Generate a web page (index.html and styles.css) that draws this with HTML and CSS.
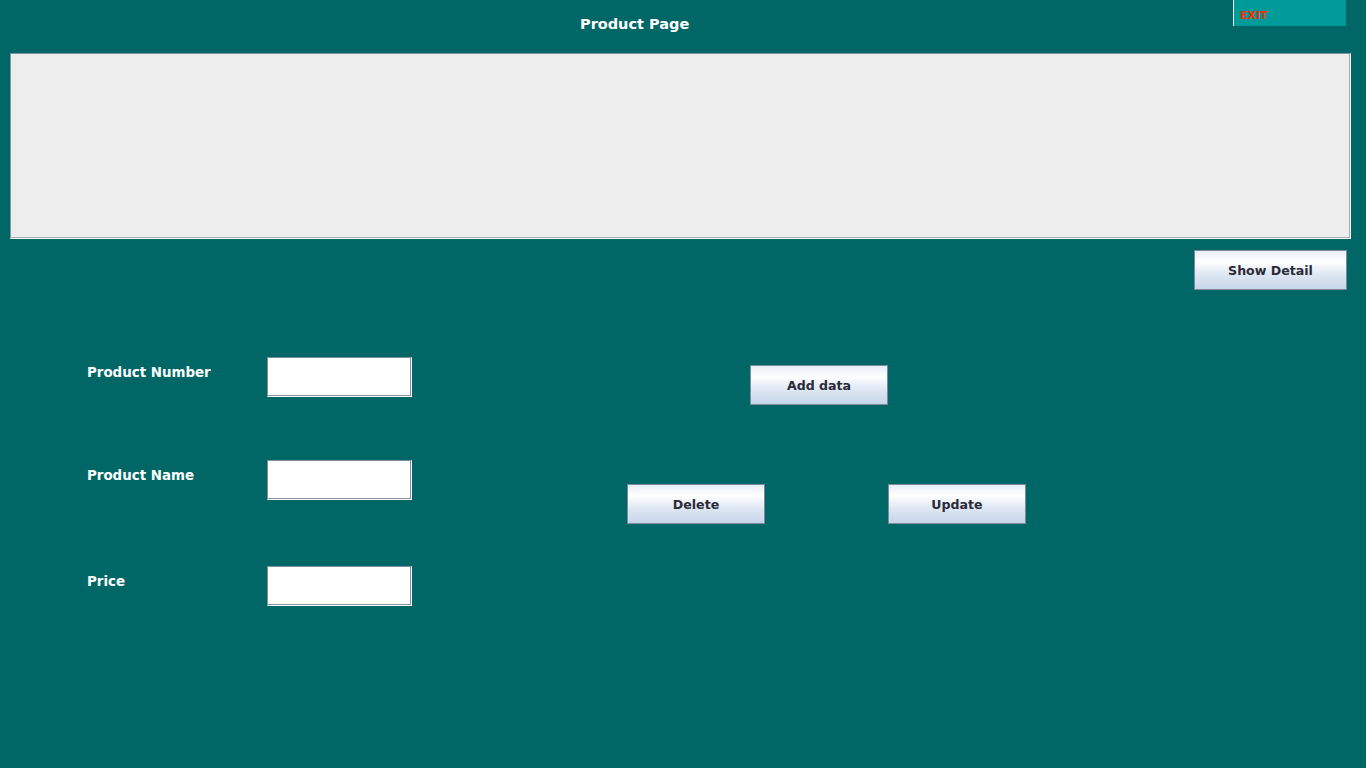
FILE: index.html
```html
<!DOCTYPE html>
<html>
<head>
<meta charset="utf-8">
<title>Product Page</title>
<link rel="stylesheet" href="styles.css">
</head>
<body>
<header class="header">
  <h1 class="title">Product Page</h1>
  <button class="exit">EXIT</button>
</header>
<div class="panel"></div>
<div class="detail-row">
  <button class="btn btn-detail">Show Detail</button>
</div>
<main class="workspace">
  <div class="form">
    <label class="label">Product Number</label>
    <input class="field" type="text">
    <label class="label">Product Name</label>
    <input class="field" type="text">
    <label class="label">Price</label>
    <input class="field" type="text">
  </div>
  <div class="actions">
    <div class="action-top">
      <button class="btn">Add data</button>
    </div>
    <div class="action-bottom">
      <button class="btn">Delete</button>
      <button class="btn">Update</button>
    </div>
  </div>
</main>
</body>
</html>
```

FILE: styles.css
```css
* { box-sizing: border-box; }
html, body {
  margin: 0;
  padding: 0;
  height: 100%;
}
body {
  background: #006766;
  font-family: "DejaVu Sans", Verdana, sans-serif;
  font-weight: bold;
  font-size: 13px;
  overflow: hidden;
}
.header {
  display: flex;
  align-items: flex-start;
  height: 53px;
}
.title {
  margin: 15px 0 0 580px;
  font-size: 14.5px;
  font-weight: bold;
  color: #ffffff;
  line-height: 18px;
}
.exit {
  margin: 0 20px 0 auto;
  width: 113px;
  height: 26px;
  background: #009a98;
  border: none;
  border-left: 1px solid #ffffff;
  color: #ff2a00;
  font-family: inherit;
  font-weight: bold;
  font-size: 11px;
  text-align: left;
  padding: 5px 0 0 6px;
  line-height: 14px;
  align-self: flex-start;
}
.panel {
  margin: 0 15px 0 10px;
  height: 186px;
  background: #ededed;
  border-top: 1px solid #8593a2;
  border-left: 1px solid #8593a2;
  border-right: 1px solid #ffffff;
  border-bottom: 1px solid #ffffff;
  box-shadow: inset -1px -1px 0 #a0acb8;
}
.detail-row {
  display: flex;
  justify-content: flex-end;
  padding-right: 19px;
  margin-top: 11px;
}
.btn {
  width: 138px;
  height: 40px;
  border: 1px solid #7b8b9b;
  background: linear-gradient(#e8eef6 0%, #ffffff 28%, #dfe8f3 60%, #c6d6ea 100%);
  color: #2b2b38;
  font-family: inherit;
  font-weight: bold;
  font-size: 12.6px;
  padding: 0;
}
.btn-detail {
  width: 153px;
}
.workspace {
  display: flex;
  align-items: flex-start;
  margin-top: 67px;
  padding-left: 87px;
}
.form {
  display: grid;
  grid-template-columns: 180px 145px;
  grid-template-rows: 40px 40px 40px;
  row-gap: 63px;
  align-items: start;
}
.form .field:nth-of-type(3) {
  margin-top: 3px;
}
.form .label:nth-of-type(3) {
  margin-top: 3px;
}
.label {
  color: #ffffff;
  font-size: 13.4px;
  padding-top: 7px;
  line-height: 18px;
}
.field {
  width: 145px;
  height: 40px;
  background: #ffffff;
  border-top: 1px solid #7f8fa0;
  border-left: 1px solid #7f8fa0;
  border-right: 1px solid #ffffff;
  border-bottom: 1px solid #ffffff;
  box-shadow: inset -1px -1px 0 #8593a2;
  outline: none;
}
.actions {
  margin-left: 215px;
  display: flex;
  flex-direction: column;
}
.action-top {
  margin-top: 8px;
  padding-left: 123px;
}
.action-bottom {
  display: flex;
  gap: 123px;
  margin-top: 79px;
}
```
